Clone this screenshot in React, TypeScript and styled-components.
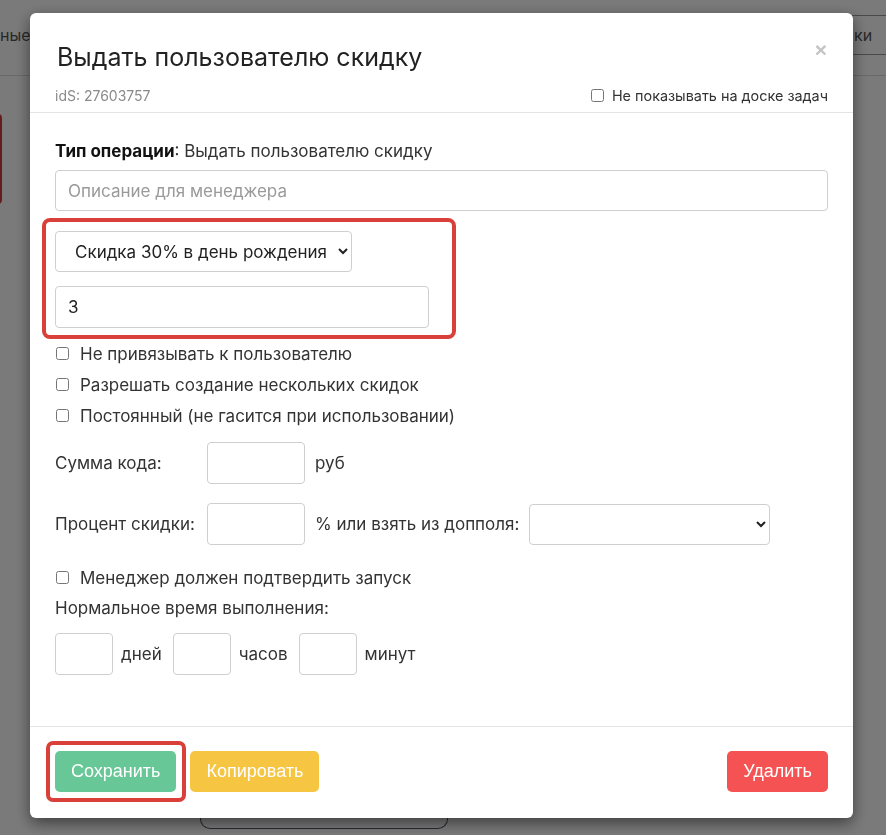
import React from 'react';
import styled, { createGlobalStyle } from 'styled-components';

const GlobalStyle = createGlobalStyle`
  html, body {
    margin: 0;
    padding: 0;
  }
  body {
    font-family: Inter, "Noto Sans", sans-serif;
    color: #333;
    background: #fff;
  }
  * {
    box-sizing: border-box;
  }
`;

// page behind the dialog
const Page = styled.div`
  height: 835px;
  overflow: hidden;
  display: flex;
  flex-direction: column;
  background: #fff;
`;

const PageTop = styled.div`
  height: 76px;
  flex-shrink: 0;
  display: flex;
  justify-content: space-between;
  align-items: center;
  padding-bottom: 6px;
  border-bottom: 1px solid #dcdcdc;
  font-size: 16px;
  color: #555;
`;

const PageButton = styled.div`
  height: 40px;
  width: 50px;
  margin-right: -12px;
  padding-left: 5px;
  display: flex;
  align-items: center;
  border: 1px solid #999;
  border-radius: 6px;
`;

const PageCard = styled.div`
  margin: 38px 0 0 -40px;
  width: 42px;
  height: 90px;
  border: 2px solid #d23b3b;
  border-radius: 4px;
`;

const PageFooter = styled.div`
  margin-top: auto;
  height: 26px;
  display: flex;
  align-items: flex-start;
`;

const PageBox = styled.div`
  margin-left: 200px;
  width: 248px;
  height: 20px;
  border: 1px solid #556;
  border-top: none;
  border-radius: 0 0 10px 10px;
`;

const Overlay = styled.div`
  position: fixed;
  inset: 0;
  background: rgba(0, 0, 0, 0.52);
  display: flex;
  align-items: flex-start;
  padding: 13px 0 0 30px;
`;

const Modal = styled.div`
  width: 823px;
  background: #fff;
  border-radius: 6px;
  box-shadow: 0 5px 15px rgba(0, 0, 0, 0.5);
  display: flex;
  flex-direction: column;
`;

const Header = styled.div`
  height: 100px;
  padding: 28px 25px 0 25px;
  border-bottom: 1px solid #e5e5e5;
`;

const TitleRow = styled.div`
  display: flex;
  justify-content: space-between;
  align-items: flex-start;
`;

const Title = styled.h4`
  margin: 0 0 0 2px;
  font-size: 25px;
  line-height: 32px;
  font-weight: 400;
  color: #222;
`;

const Close = styled.button`
  margin: -1px 1px 0 0;
  padding: 0;
  border: none;
  background: none;
  font-family: "Liberation Sans", sans-serif;
  font-size: 21px;
  line-height: 20px;
  font-weight: 700;
  color: #c4c4c4;
`;

const SubRow = styled.div`
  margin-top: 13px;
  height: 18px;
  display: flex;
  justify-content: space-between;
  align-items: center;
`;

const Ids = styled.span`
  font-size: 14px;
  color: #8a8a8a;
`;

const Body = styled.div`
  padding: 26px 25px 51px;
  display: flex;
  flex-direction: column;
  font-size: 17px;
`;

const OpType = styled.div`
  line-height: 24px;
  color: #333;

  b {
    color: #111;
    font-weight: 700;
  }
`;

const DescWrap = styled.div`
  margin-top: 7px;
`;

const TextInput = styled.input<{ $w?: number }>`
  display: block;
  height: ${p => (p.$w ? 42 : 41)}px;
  width: ${p => (p.$w ? `${p.$w}px` : '100%')};
  padding: 0 12px;
  border: 1px solid #cfcfcf;
  border-radius: 4px;
  font-family: inherit;
  font-size: 17px;
  color: #222;
  outline: none;

  &::placeholder {
    color: #9a9a9a;
  }
`;

const Select = styled.select<{ $w: number }>`
  display: block;
  height: 41px;
  width: ${p => p.$w}px;
  padding: 0 6px 0 15px;
  border: 1px solid #cfcfcf;
  border-radius: 4px;
  background: #fff;
  font-family: inherit;
  font-size: 17px;
  color: #222;
`;

const Highlight = styled.div`
  margin: 7px 0 0 -13px;
  width: 414px;
  padding: 9px 0 7px 9px;
  border: 4px solid #d9403a;
  border-radius: 8px;
  display: flex;
  flex-direction: column;
  gap: 14px;
`;

const Checks = styled.div`
  margin-top: -1px;
  display: flex;
  flex-direction: column;
`;

const Check = styled.label<{ $small?: boolean; $mt?: number }>`
  margin-top: ${p => p.$mt ?? 0}px;
  display: flex;
  align-items: center;
  gap: ${p => (p.$small ? 8 : 11)}px;
  height: ${p => (p.$small ? 18 : 31)}px;
  font-size: ${p => (p.$small ? 14.4 : 17)}px;
  color: #333;

  input {
    margin: 0 0 0 1px;
    width: 13px;
    height: 13px;
  }
`;

const FieldRow = styled.div<{ $mt: number }>`
  margin-top: ${p => p.$mt}px;
  display: flex;
  align-items: center;
  gap: 10px;
`;

const FieldLabel = styled.span`
  width: 142px;
`;

const Caption = styled.div`
  margin-top: 3px;
  line-height: 24px;
`;

const TimeRow = styled.div`
  margin-top: 13px;
  display: flex;
  align-items: center;
`;

const Unit = styled.span`
  margin: 0 11px 0 8px;
`;

const Footer = styled.div`
  border-top: 1px solid #e5e5e5;
  padding: 24px 25px 26px;
  display: flex;
  align-items: center;
`;

const Marked = styled.div`
  margin: -10px 4px -10px -9px;
  padding: 6px 6px 6px 5px;
  border: 4px solid #d9403a;
  border-radius: 7px;
`;

const Button = styled.button<{ $bg: string }>`
  height: 41px;
  padding: 0 16px;
  border: none;
  border-radius: 5px;
  background: ${p => p.$bg};
  color: #fff;
  font-family: "Liberation Sans", Arial, sans-serif;
  font-size: 18px;
`;

const Spacer = styled.div`
  flex: 1;
`;

export default function App() {
  return (
    <>
      <GlobalStyle />
      <Page>
        <PageTop>
          <span>ные</span>
          <PageButton>ки</PageButton>
        </PageTop>
        <PageCard />
        <PageFooter>
          <PageBox />
        </PageFooter>
      </Page>
      <Overlay>
        <Modal>
          <Header>
            <TitleRow>
              <Title>Выдать пользователю скидку</Title>
              <Close>×</Close>
            </TitleRow>
            <SubRow>
              <Ids>idS: 27603757</Ids>
              <Check $small>
                <input type="checkbox" />
                Не показывать на доске задач
              </Check>
            </SubRow>
          </Header>
          <Body>
            <OpType>
              <b>Тип операции</b>: Выдать пользователю скидку
            </OpType>
            <DescWrap>
              <TextInput placeholder="Описание для менеджера" />
            </DescWrap>
            <Highlight>
              <Select $w={297} defaultValue="b30">
                <option value="b30">Скидка 30% в день рождения</option>
              </Select>
              <TextInput $w={374} defaultValue="3" />
            </Highlight>
            <Checks>
              <Check>
                <input type="checkbox" />
                Не привязывать к пользователю
              </Check>
              <Check>
                <input type="checkbox" />
                Разрешать создание нескольких скидок
              </Check>
              <Check>
                <input type="checkbox" />
                Постоянный (не гасится при использовании)
              </Check>
            </Checks>
            <FieldRow $mt={11}>
              <FieldLabel>Сумма кода:</FieldLabel>
              <TextInput $w={98} />
              <span>руб</span>
            </FieldRow>
            <FieldRow $mt={19}>
              <FieldLabel>Процент скидки:</FieldLabel>
              <TextInput $w={98} />
              <span>% или взять из допполя:</span>
              <Select $w={241} defaultValue="">
                <option value=""></option>
              </Select>
            </FieldRow>
            <Check $mt={17}>
              <input type="checkbox" />
              Менеджер должен подтвердить запуск
            </Check>
            <Caption>Нормальное время выполнения:</Caption>
            <TimeRow>
              <TextInput $w={58} />
              <Unit>дней</Unit>
              <TextInput $w={58} />
              <Unit>часов</Unit>
              <TextInput $w={58} />
              <Unit>минут</Unit>
            </TimeRow>
          </Body>
          <Footer>
            <Marked>
              <Button $bg="#67c796">Сохранить</Button>
            </Marked>
            <Button $bg="#f6c643">Копировать</Button>
            <Spacer />
            <Button $bg="#f55353">Удалить</Button>
          </Footer>
        </Modal>
      </Overlay>
    </>
  );
}
